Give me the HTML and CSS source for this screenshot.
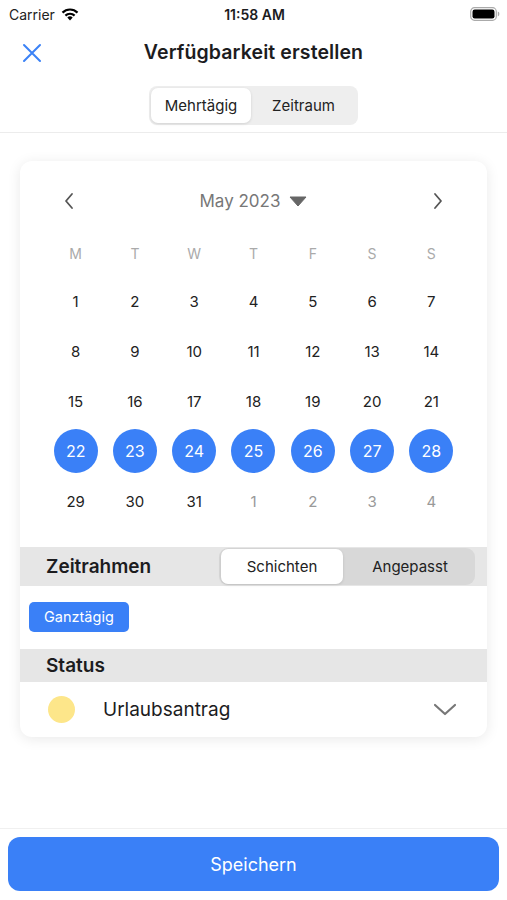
FILE: index.html
```html
<!DOCTYPE html>
<html lang="de">
<head>
<meta charset="UTF-8">
<meta name="viewport" content="width=device-width, initial-scale=1.0">
<title>Verfügbarkeit erstellen</title>
<link rel="stylesheet" href="styles.css">
</head>
<body>
<div class="app">
  <div class="status-bar">
    <div class="carrier">
      Carrier
      <svg class="wifi" width="18" height="13" viewBox="0 0 18 13">
        <path d="M9 12.5 L6.3 9.6 A4 4 0 0 1 11.7 9.6 Z" fill="#000"/>
        <path d="M4.4 7.6 A6.6 6.6 0 0 1 13.6 7.6" stroke="#000" stroke-width="2.2" fill="none"/>
        <path d="M1.5 4.6 A10.6 10.6 0 0 1 16.5 4.6" stroke="#000" stroke-width="2.2" fill="none"/>
      </svg>
    </div>
    <div class="time">11:58 AM</div>
    <div class="battery">
      <svg width="30" height="14" viewBox="0 0 30 14">
        <rect x="0.7" y="0.7" width="25.6" height="12.6" rx="3.8" fill="none" stroke="#aaa" stroke-width="1.2"/>
        <rect x="2.5" y="2.5" width="22" height="9" rx="2.2" fill="#000"/>
        <path d="M27.8 4.6 Q29.4 5 29.4 7 Q29.4 9 27.8 9.4 Z" fill="#aaa"/>
      </svg>
    </div>
  </div>

  <div class="nav">
    <svg class="close" width="20" height="20" viewBox="0 0 20 20">
      <path d="M2 2 L18 18 M18 2 L2 18" stroke="#3b82f6" stroke-width="2" stroke-linecap="round"/>
    </svg>
    <h1>Verfügbarkeit erstellen</h1>
  </div>

  <div class="mode-wrap">
    <div class="segment mode">
      <span class="seg-item active">Mehrtägig</span>
      <span class="seg-item">Zeitraum</span>
    </div>
  </div>

  <div class="content">
    <div class="card">
      <div class="calendar">
        <div class="month-head">
          <svg width="12" height="18" viewBox="0 0 12 18"><path d="M9 2 L3 9 L9 16" stroke="#555" stroke-width="1.8" fill="none" stroke-linecap="round" stroke-linejoin="round"/></svg>
          <div class="month">May 2023
            <svg width="18" height="11" viewBox="0 0 18 11"><path d="M1 1 H17 L9 10 Z" fill="#666" stroke="#666" stroke-linejoin="round"/></svg>
          </div>
          <svg width="12" height="18" viewBox="0 0 12 18"><path d="M3 2 L9 9 L3 16" stroke="#555" stroke-width="1.8" fill="none" stroke-linecap="round" stroke-linejoin="round"/></svg>
        </div>
        <div class="weekdays">
          <span>M</span><span>T</span><span>W</span><span>T</span><span>F</span><span>S</span><span>S</span>
        </div>
        <div class="days">
          <span>1</span><span>2</span><span>3</span><span>4</span><span>5</span><span>6</span><span>7</span>
          <span>8</span><span>9</span><span>10</span><span>11</span><span>12</span><span>13</span><span>14</span>
          <span>15</span><span>16</span><span>17</span><span>18</span><span>19</span><span>20</span><span>21</span>
          <span class="sel"><b>22</b></span><span class="sel"><b>23</b></span><span class="sel"><b>24</b></span><span class="sel"><b>25</b></span><span class="sel"><b>26</b></span><span class="sel"><b>27</b></span><span class="sel"><b>28</b></span>
          <span>29</span><span>30</span><span>31</span><span class="other">1</span><span class="other">2</span><span class="other">3</span><span class="other">4</span>
        </div>
      </div>

      <div class="section-head">
        <h2>Zeitrahmen</h2>
        <div class="segment small">
          <span class="seg-item active">Schichten</span>
          <span class="seg-item">Angepasst</span>
        </div>
      </div>
      <div class="chips">
        <span class="chip">Ganztägig</span>
      </div>

      <div class="section-head status-head">
        <h2>Status</h2>
      </div>
      <div class="status-row">
        <span class="dot"></span>
        <span class="status-label">Urlaubsantrag</span>
        <svg width="24" height="14" viewBox="0 0 24 14"><path d="M2 2 L12 11 L22 2" stroke="#777" stroke-width="2.2" fill="none" stroke-linecap="round" stroke-linejoin="round"/></svg>
      </div>
    </div>
  </div>

  <div class="footer">
    <button class="save">Speichern</button>
  </div>
</div>
</body>
</html>
```

FILE: styles.css
```css
* {
  box-sizing: border-box;
}
body {
  margin: 0;
  font-family: 'Inter', 'Liberation Sans', sans-serif;
  color: #1c1c1e;
  background: #fff;
}
.app {
  width: 507px;
  height: 900px;
  display: flex;
  flex-direction: column;
}
.status-bar {
  height: 28px;
  display: flex;
  align-items: center;
  justify-content: space-between;
  padding: 0 7px 0 9px;
  font-size: 14px;
}
.carrier {
  display: flex;
  align-items: center;
  gap: 6px;
  width: 110px;
  color: #222;
}
.time {
  font-weight: 600;
}
.battery {
  width: 110px;
  text-align: right;
  line-height: 0;
}
.nav {
  height: 48px;
  display: flex;
  align-items: center;
  position: relative;
  justify-content: center;
}
.close {
  position: absolute;
  left: 22px;
  top: 15px;
}
.nav h1 {
  margin: 0;
  font-size: 19.5px;
  font-weight: 600;
  letter-spacing: 0.1px;
}
.mode-wrap {
  display: flex;
  justify-content: center;
  padding: 10px 0 7px;
  border-bottom: 1px solid #ececec;
}
.segment {
  display: flex;
  background: #eeeeee;
  border-radius: 8px;
  padding: 2px;
}
.seg-item {
  display: flex;
  align-items: center;
  justify-content: center;
  color: #222;
}
.seg-item.active {
  background: #fff;
  border-radius: 7px;
  box-shadow: 0 1px 3px rgba(0, 0, 0, 0.12);
}
.mode .seg-item {
  height: 35px;
  font-size: 15px;
}
.mode .seg-item.active {
  width: 100px;
}
.mode .seg-item:last-child {
  width: 105px;
}
.content {
  padding: 28px 20px 0;
}
.card {
  background: #fff;
  border-radius: 12px;
  box-shadow: 0 2px 14px rgba(0, 0, 0, 0.09);
  overflow: hidden;
}
.calendar {
  padding: 20px 26px 21px;
}
.month-head {
  height: 40px;
  display: flex;
  align-items: center;
  justify-content: space-between;
  padding: 0 17px;
}
.month {
  display: flex;
  align-items: center;
  gap: 9px;
  font-size: 17px;
  color: #777;
}
.weekdays,
.days {
  display: grid;
  grid-template-columns: repeat(7, 1fr);
  text-align: center;
}
.weekdays {
  margin-top: 23px;
  height: 20px;
  line-height: 20px;
  font-size: 14px;
  color: #aaa;
}
.days {
  margin-top: 12px;
  grid-auto-rows: 50px;
  font-size: 15px;
  color: #222;
}
.days span {
  display: flex;
  align-items: center;
  justify-content: center;
}
.days .other {
  color: #999;
}
.days .sel b {
  font-weight: 400;
  width: 44px;
  height: 44px;
  border-radius: 50%;
  background: #3a80f7;
  color: #fff;
  display: flex;
  align-items: center;
  justify-content: center;
  font-size: 16px;
}
.section-head {
  display: flex;
  align-items: center;
  justify-content: space-between;
  background: #e6e6e6;
  height: 39px;
  padding: 0 12px 0 26px;
}
.section-head h2 {
  margin: 0;
  font-size: 19px;
  font-weight: 600;
}
.segment.small {
  background: #d8d8d8;
  padding: 1px 2px;
  border-radius: 9px;
}
.small .seg-item {
  height: 35px;
  font-size: 15px;
  width: 126px;
}
.small .seg-item.active {
  width: 122px;
  margin-right: 4px;
}
.chips {
  padding: 16px 9px 17px;
}
.chip {
  display: inline-block;
  background: #3a80f7;
  color: #fff;
  font-size: 14.5px;
  padding: 6px 15px 7px;
  border-radius: 5px;
}
.status-head {
  height: 33px;
  margin-top: 0;
}
.status-row {
  height: 55px;
  display: flex;
  align-items: center;
  padding: 0 30px 0 28px;
}
.dot {
  width: 27px;
  height: 27px;
  border-radius: 50%;
  background: #fde68a;
}
.status-label {
  flex: 1;
  font-size: 19px;
  margin-left: 28px;
}
.footer {
  margin-top: auto;
  border-top: 1px solid #f0f0f0;
  padding: 8px 8px 9px;
}
.save {
  width: 100%;
  height: 54px;
  border: none;
  border-radius: 12px;
  background: #3a80f7;
  color: #fff;
  font-family: inherit;
  font-size: 18px;
}
```
